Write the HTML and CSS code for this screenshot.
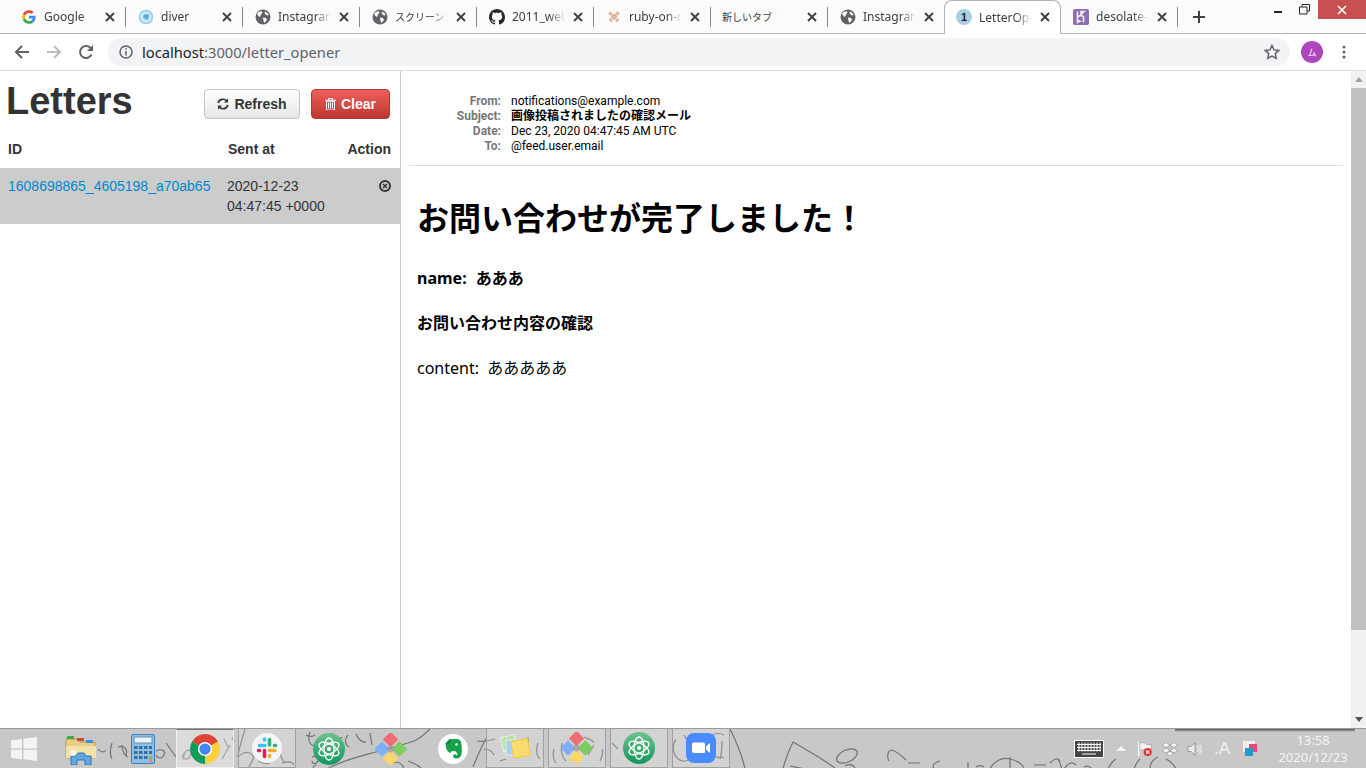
FILE: index.html
```html
<!DOCTYPE html>
<html lang="ja">
<head>
  <title>LetterOpener</title>
  <meta charset="UTF-8">
  <link rel="stylesheet" href="styles.css">
</head>
<body>
  <svg class="sprite" width="0" height="0">
    <symbol id="globe" viewBox="0 0 16 16">
      <circle cx="8" cy="8" r="7.5" fill="#5f6368"/>
      <path d="M3 3.5l3.5-1.5 1 1.5-1.5 2-1 2.5-1.5-1L2 5zM8 8.5l3 .5 1 2-2.5 3-1-2zM10 2.5l3 2 .5 2-2.5-.5-1.5-2z" fill="#fff"/>
    </symbol>
    <symbol id="tabx" viewBox="0 0 10 10">
      <path d="M1 1l8 8M9 1l-8 8" stroke="#3c4043" stroke-width="1.9"/>
    </symbol>
    <symbol id="atom" viewBox="0 0 32 32">
      <defs><linearGradient id="atomBg" x1="0" y1="0" x2="0" y2="1"><stop offset="0" stop-color="#6cc38c"/><stop offset="1" stop-color="#12965f"/></linearGradient></defs>
      <circle cx="16" cy="16" r="16" fill="url(#atomBg)"/>
      <g fill="none" stroke="#fff" stroke-width="1.3">
        <ellipse cx="16" cy="16" rx="11" ry="5" transform="rotate(28 16 16)"/>
        <ellipse cx="16" cy="16" rx="11" ry="5" transform="rotate(-28 16 16)"/>
        <ellipse cx="16" cy="16" rx="11" ry="5" transform="rotate(90 16 16)"/>
      </g>
      <circle cx="16" cy="16" r="2" fill="#fff"/>
    </symbol>
    <symbol id="gem" viewBox="0 0 32 32">
      <rect x="10" y="1" width="11" height="11" fill="#ee6e73" transform="rotate(45 15.5 6.5)"/>
      <rect x="1.5" y="10.5" width="11" height="11" fill="#7fb0f5" transform="rotate(45 7 16)"/>
      <rect x="19" y="10.5" width="11" height="11" fill="#7ecb5f" transform="rotate(45 24.5 16)"/>
      <rect x="10" y="20" width="11" height="11" fill="#f8d86a" transform="rotate(45 15.5 25.5)"/>
      <circle cx="15.5" cy="16" r="3.5" fill="#9a9a9a" opacity=".7"/>
    </symbol>
  </svg>

  <div class="tab-strip">
    <div class="tab">
      <svg class="tab-icon" viewBox="-4 -4 56 56">
        <path fill="#EA4335" d="M24 9.5c3.54 0 6.71 1.22 9.21 3.6l6.85-6.85C35.9 2.38 30.47 0 24 0 14.62 0 6.51 5.38 2.56 13.22l7.98 6.19C12.43 13.72 17.74 9.5 24 9.5z"/>
        <path fill="#4285F4" d="M46.98 24.55c0-1.57-.15-3.09-.38-4.55H24v9.02h12.94c-.58 2.96-2.26 5.48-4.78 7.18l7.73 6c4.51-4.18 7.09-10.36 7.09-17.65z"/>
        <path fill="#FBBC05" d="M10.53 28.59c-.48-1.45-.76-2.99-.76-4.59s.27-3.14.76-4.59l-7.98-6.19C.92 16.46 0 20.12 0 24c0 3.88.92 7.54 2.56 10.78l7.97-6.19z"/>
        <path fill="#34A853" d="M24 48c6.48 0 11.93-2.13 15.89-5.81l-7.73-6c-2.15 1.45-4.92 2.3-8.16 2.3-6.26 0-11.57-4.22-13.47-9.91l-7.98 6.19C6.51 42.62 14.62 48 24 48z"/>
      </svg>
      <span class="tab-title">Google</span><svg class="tab-close"><use href="#tabx"/></svg>
    </div>
    <div class="tab">
      <svg class="tab-icon" viewBox="0 0 16 16">
        <circle cx="8" cy="8" r="6.5" fill="#cfe9f7" stroke="#8fcdee" stroke-width="1.5"/>
        <circle cx="8" cy="8" r="3" fill="#7cc0e8"/>
        <path d="M5 7l6-2-2 6-1.5-2.5z" fill="#4fa8dc"/>
      </svg>
      <span class="tab-title">diver</span><svg class="tab-close"><use href="#tabx"/></svg>
    </div>
    <div class="tab">
      <svg class="tab-icon"><use href="#globe"/></svg>
      <span class="tab-title">Instagram</span><svg class="tab-close"><use href="#tabx"/></svg>
    </div>
    <div class="tab">
      <svg class="tab-icon"><use href="#globe"/></svg>
      <span class="tab-title tab-title-ja">スクリーンショット</span><svg class="tab-close"><use href="#tabx"/></svg>
    </div>
    <div class="tab">
      <svg class="tab-icon" viewBox="0 0 16 16">
        <path fill="#24292e" d="M8 0C3.58 0 0 3.58 0 8c0 3.54 2.29 6.53 5.47 7.59.4.07.55-.17.55-.38 0-.19-.01-.82-.01-1.49-2.01.37-2.53-.49-2.69-.94-.09-.23-.48-.94-.82-1.13-.28-.15-.68-.52-.01-.53.63-.01 1.08.58 1.23.82.72 1.21 1.87.87 2.33.66.07-.52.28-.87.51-1.07-1.78-.2-3.64-.89-3.64-3.95 0-.87.31-1.59.82-2.15-.08-.2-.36-1.02.08-2.12 0 0 .67-.21 2.2.82.64-.18 1.32-.27 2-.27.68 0 1.36.09 2 .27 1.53-1.04 2.2-.82 2.2-.82.44 1.1.16 1.92.08 2.12.51.56.82 1.27.82 2.15 0 3.07-1.87 3.75-3.65 3.95.29.25.54.73.54 1.48 0 1.07-.01 1.93-.01 2.2 0 .21.15.46.55.38A8.013 8.013 0 0016 8c0-4.42-3.58-8-8-8z"/>
      </svg>
      <span class="tab-title">2011_web</span><svg class="tab-close"><use href="#tabx"/></svg>
    </div>
    <div class="tab">
      <svg class="tab-icon" viewBox="0 0 16 16">
        <path d="M3.5 3.5l9 9M12.5 3.5l-9 9" stroke="#dcb09c" stroke-width="3.5" stroke-dasharray="2.5 .7"/>
      </svg>
      <span class="tab-title">ruby-on-rails</span><svg class="tab-close"><use href="#tabx"/></svg>
    </div>
    <div class="tab tab-plain">
      <span class="tab-title tab-title-ja">新しいタブ</span><svg class="tab-close"><use href="#tabx"/></svg>
    </div>
    <div class="tab">
      <svg class="tab-icon"><use href="#globe"/></svg>
      <span class="tab-title">Instagram</span><svg class="tab-close"><use href="#tabx"/></svg>
    </div>
    <div class="tab active">
      <svg class="tab-icon" viewBox="0 0 16 16">
        <circle cx="8" cy="8" r="8" fill="#a9cfe2"/>
        <text x="8" y="12" class="count-text">1</text>
      </svg>
      <span class="tab-title">LetterOpener</span><svg class="tab-close"><use href="#tabx"/></svg>
    </div>
    <div class="tab">
      <svg class="tab-icon" viewBox="0 0 16 16">
        <rect width="16" height="16" rx="2" fill="#8f6db3"/>
        <path d="M4.5 2.5v11M4.5 8c2-1.5 5-2 6 0v5.5M8 2.5l3 0-3 3zM4.5 11v2.5l2.5-1.2z" fill="none" stroke="#efe8f5" stroke-width="1.7"/>
      </svg>
      <span class="tab-title">desolate-river</span><svg class="tab-close"><use href="#tabx"/></svg>
    </div>
    <svg class="new-tab" width="12" height="12" viewBox="0 0 12 12"><path d="M6 0v12M0 6h12" stroke="#3c4043" stroke-width="2"/></svg>
    <div class="win-controls">
      <div class="win-btn"><svg width="10" height="10" viewBox="0 0 10 10"><path d="M1 7h8" stroke="#222" stroke-width="2"/></svg></div>
      <div class="win-btn"><svg width="11" height="11" viewBox="0 0 11 11"><path d="M3 2.5V.5h7.5V7H8M.5 3h7.5v7H.5z" fill="none" stroke="#222" stroke-width="1"/></svg></div>
      <div class="win-close"><svg width="10" height="10" viewBox="0 0 10 10"><path d="M1 1l8 8M9 1l-8 8" stroke="#fff" stroke-width="1.6"/></svg></div>
    </div>
  </div>

  <div class="toolbar">
    <div class="tool-btn"><svg width="16" height="16" viewBox="0 0 16 16"><path d="M15 8H2M8 2L2 8l6 6" fill="none" stroke="#5f6368" stroke-width="2"/></svg></div>
    <div class="tool-btn"><svg width="16" height="16" viewBox="0 0 16 16"><path d="M1 8h13M8 2l6 6-6 6" fill="none" stroke="#b9bbbe" stroke-width="2"/></svg></div>
    <div class="tool-btn"><svg width="16" height="16" viewBox="0 0 16 16"><path d="M13.5 10.5A6 6 0 1 1 12.3 3.8L14.5 6" fill="none" stroke="#5f6368" stroke-width="2"/><path d="M15 1v6H9z" fill="#5f6368"/></svg></div>
    <div class="omnibox">
      <svg width="14" height="14" viewBox="0 0 14 14"><circle cx="7" cy="7" r="6" fill="none" stroke="#5f6368" stroke-width="1.5"/><path d="M7 6v4.5M7 3.3v1.5" stroke="#5f6368" stroke-width="1.5"/></svg>
      <span class="url"><span class="url-host">localhost</span>:3000/letter_opener</span>
      <svg class="star" width="16" height="16" viewBox="0 0 16 16"><path d="M8 1.5l2 4.4 4.8.5-3.600 3.200 1 4.700L8 12l-4.200 2.300 1-4.700L1.200 6.400 6 5.900z" fill="none" stroke="#5f6368" stroke-width="1.5"/></svg>
    </div>
    <div class="avatar">ム</div>
    <svg class="menu-dots" width="4" height="14" viewBox="0 0 4 14"><circle cx="2" cy="2" r="1.5" fill="#5f6368"/><circle cx="2" cy="7" r="1.5" fill="#5f6368"/><circle cx="2" cy="12" r="1.5" fill="#5f6368"/></svg>
  </div>

  <div class="main">
    <div class="letters">
      <div class="letters-head">
        <h1>Letters</h1>
        <a class="btn btn-refresh">
          <svg width="12" height="12" viewBox="0 0 12 12"><path d="M1.2 5a4.900 4.900 0 0 1 8.500-2M10.800 7a4.900 4.900 0 0 1-8.500 2" fill="none" stroke="#333" stroke-width="1.7"/><path d="M11 .5V4.500H7zM1 11.500V7.500H5z" fill="#333"/></svg>
          Refresh
        </a>
        <a class="btn btn-clear">
          <svg width="11" height="12" viewBox="0 0 11 12"><path d="M0 2.200h11M3.500 2V.6h4V2" fill="none" stroke="#fff" stroke-width="1"/><path d="M1.500 3.200h8V12h-8zM3.500 4.500v6M5.500 4.500v6M7.500 4.500v6" fill="none" stroke="#fff" stroke-width="1"/></svg>
          Clear
        </a>
      </div>
      <div class="letters-cols">
        <span>ID</span><span>Sent at</span><span>Action</span>
      </div>
      <div class="letter-row">
        <a class="letter-id">1608698865_4605198_a70ab65</a>
        <span class="letter-date">2020-12-23<br>04:47:45 +0000</span>
        <svg class="letter-del" width="12" height="12" viewBox="0 0 12 12"><circle cx="6" cy="6" r="5" fill="none" stroke="#333" stroke-width="2"/><path d="M4 4l4 4M8 4l-4 4" stroke="#333" stroke-width="1.5"/></svg>
      </div>
    </div>

    <div class="preview">
      <dl class="mail-head">
        <dt>From:</dt><dd>notifications@example.com</dd>
        <dt>Subject:</dt><dd class="subject">画像投稿されましたの確認メール</dd>
        <dt>Date:</dt><dd>Dec 23, 2020 04:47:45 AM UTC</dd>
        <dt>To:</dt><dd>@feed.user.email</dd>
      </dl>
      <div class="mail-body">
        <h1>お問い合わせが完了しました！</h1>
        <h3>name: あああ</h3>
        <h3>お問い合わせ内容の確認</h3>
        <p>content: あああああ</p>
      </div>
    </div>

    <div class="scrollbar">
      <div class="scroll-arrow"><span class="arrow-up"></span></div>
      <div class="scroll-track"><div class="scroll-thumb"></div></div>
      <div class="scroll-arrow"><span class="arrow-down"></span></div>
    </div>
  </div>

  <div class="taskbar">
    <svg class="wallpaper" width="1366" height="40" viewBox="0 0 1366 40">
      <g fill="none" stroke="#737373" stroke-width="1.2">
        <path d="M98 20c2 3 6 4 8 1M112 14c-2 6-2 12 0 16M118 18c6-2 10 2 8 8M122 16c0 6 2 10 6 12M146 16c-4 2-6 8-2 12M156 22c6-3 10 0 8 4s-6 4-8 0M166 14l10 14"/>
        <path d="M184 28c0-6 4-8 6-6s0 8-4 8-4-2-2-6M224 10l4 8M232 8l2 5M222 30l8-14"/>
        <path d="M245 0c-2 8-6 18-7 28M238 28c6-6 12-6 16 0M248 40l6-12M258 32c4 2 8 4 12 2M282 34c6-2 10-2 12 2M280 22c0 4 2 10 6 12"/>
        <path d="M306 6c3 2 6 2 9 0M310 3c-2 6-2 12 4 14M322 6c-2 5 0 10 5 8M332 4c4 6 8 8 10 4M348 6c-4 4-3 10 1 12M356 5c2 5 6 9 10 8M370 4l2 12M312 28c5-2 8 0 6 4s-6 3-6 0M316 36c-4 2-4 4 0 4"/>
        <path d="M327 40c14-8 30-12 45-16 16-4 30-8 42-12 8-4 12-8 16-12"/>
        <path d="M392 34c6-2 10 0 12 6M408 32c6 2 10 4 14 8"/>
        <path d="M473 38c4-10 8-20 14-30M477 12c6 1 12 0 18-2M484 20c4 0 8 2 10 6M500 32l6-2M516 14c2-2 6-2 6 2s-4 6-6 4M528 8v14M538 14c-2 6-2 12 2 16"/>
        <path d="M554 20c-2 6 0 12 2 14M562 14c-2 8 0 14 4 18M584 8c4 2 8 2 10 6M588 26l6-10M602 20c2 4 0 8-2 12M612 14l6 6M630 18l10 0"/>
        <path d="M684 6c4 6 8 12 8 20M676 10c-4 6-4 14 2 20 6 4 14 2 14-6M712 6c4-2 8-2 12 0M722 12c0 6 0 12-2 18M712 26c4 2 8 4 12 2"/>
        <path d="M730 0c6 12 12 26 15 40M793 13c-4 8-8 18-10 27M793 13c14 8 28 16 42 26M790 37l15 3"/>
        <ellipse cx="847" cy="27" rx="11" ry="6" transform="rotate(-25 847 27)"/>
        <path d="M845 37c4-2 8-2 10 2M892 21c-5 0-5 8-3 11M892 21c6 2 10 6 14 10M908 34h12M940 32c-6 1-8 5-6 8M968 33v7M976 38c4-2 6-2 8 0M990 40c4-8 12-12 20-10s14 6 14 10M1010 28v12M1034 36h12M1050 34c4-4 8-6 10-2M1058 30c2 2 2 6 4 10"/>
        <path d="M1064 40c4-6 8-8 12-4M1084 38c4-2 6 0 8 2M1108 40c2-4 4-8 8-10M1134 40c2-6 4-8 6-10M1150 40c0-6 4-10 8-12M1166 30c4 2 8 6 10 10"/>
      </g>
    </svg>
    <div class="window-shadow"></div>
    <div class="start">
      <svg width="28" height="26" viewBox="0 0 28 26"><path d="M1 4.5l11-1.500v9.500H1zM13.500 2.800L27 1v11.500H13.500zM1 13.700h11v9.500L1 21.700zM13.500 13.700H27V25l-13.500-1.800z" fill="#f4f4f4"/></svg>
    </div>
    <div class="task-apps">
      <div class="task-app">
        <svg width="32" height="32" viewBox="0 0 32 32">
          <path d="M1 6h12l2 3h15v16H1z" fill="#e9cf85" stroke="#b49a52"/>
          <rect x="2" y="3" width="7" height="3" fill="#3fae49"/><rect x="12" y="5" width="7" height="3" fill="#d8473e"/><rect x="21" y="7" width="7" height="3" fill="#3c8fdc"/>
          <path d="M1 13h30v12H1z" fill="#f3e2a8"/>
          <path d="M6 32V23h5l2-3h6l2 3h5v9h-6v-5h-8v5z" fill="#5fa8e0" stroke="#2f75b5"/>
          <circle cx="8" cy="20" r="3" fill="#fff" opacity=".8"/>
        </svg>
      </div>
      <div class="task-app">
        <svg width="24" height="30" viewBox="0 0 24 30">
          <rect x=".5" y=".5" width="23" height="29" rx="1.5" fill="#8cc0e8" stroke="#3a7fb8"/>
          <rect x="3" y="3" width="18" height="6" fill="#e8f2f8" stroke="#6a8ea8"/>
          <g fill="#3b6e98"><rect x="3" y="12" width="3.5" height="3"/><rect x="8" y="12" width="3.5" height="3"/><rect x="13" y="12" width="3.5" height="3"/><rect x="18" y="12" width="3" height="3"/><rect x="3" y="17" width="3.5" height="3"/><rect x="8" y="17" width="3.5" height="3"/><rect x="13" y="17" width="3.5" height="3"/><rect x="18" y="17" width="3" height="3"/><rect x="3" y="22" width="3.5" height="3"/><rect x="8" y="22" width="3.5" height="3"/><rect x="13" y="22" width="3.5" height="3"/></g>
          <rect x="18" y="22" width="3" height="6" fill="#e8913a"/>
        </svg>
      </div>
      <div class="task-app boxed active-app">
        <svg width="30" height="30" viewBox="0 0 32 32">
          <path d="M16 16L2.200 8A16 16 0 0 1 29.900 8z" fill="#db4437"/>
          <path d="M16 16L2.200 8A16 16 0 0 0 16 32z" fill="#0f9d58"/>
          <path d="M16 16L29.900 8A16 16 0 0 1 16 32z" fill="#ffcd40"/>
          <circle cx="16" cy="16" r="7.5" fill="#fff"/><circle cx="16" cy="16" r="6" fill="#4285f4"/>
        </svg>
      </div>
      <div class="task-app boxed">
        <svg width="30" height="30" viewBox="0 0 30 30">
          <circle cx="15" cy="15" r="15" fill="#f5f5f5"/>
          <g stroke-width="3.6" stroke-linecap="round" fill="none">
            <path d="M7.5 12.500h5.500M12.500 6v1" stroke="#36c5f0"/>
            <path d="M17.5 6.500v5.500M23.500 12.500h-1" stroke="#2eb67d"/>
            <path d="M23 17.500h-5.500M17.500 23.500v-1" stroke="#ecb22e"/>
            <path d="M12.5 23.500V17.500M6.500 17.500h1" stroke="#e01e5a"/>
          </g>
        </svg>
      </div>
      <div class="task-app"><svg width="32" height="32"><use href="#atom"/></svg></div>
      <div class="task-app"><svg width="32" height="32"><use href="#gem"/></svg></div>
      <div class="task-app">
        <svg width="30" height="30" viewBox="0 0 30 30">
          <circle cx="15" cy="15" r="15" fill="#fff"/>
          <path d="M7.5 9.500L12 5h6c3 0 4.500 1 5 3 .8 4 1.200 9 .4 12.500-.8 3-3.200 4.500-6 4-2-.3-2.800-2-2-3.500.7-1 2.500-1 3 .5l1-.2c0-3-1.500-4-3.500-4.300-2-.3-3 .5-3.500 2-2-.5-4-3-4.500-6z" fill="#14a14a"/>
          <path d="M7.5 9.500L12 5v4.500z" fill="#0e7a36"/>
          <circle cx="18.5" cy="10.5" r="1.2" fill="#fff"/>
        </svg>
      </div>
      <div class="task-app boxed">
        <svg width="32" height="30" viewBox="0 0 32 30">
          <rect x="3" y="3" width="14" height="14" fill="#b8e4a8" stroke="#e8f5e0" transform="rotate(-15 10 10)"/>
          <rect x="7" y="7" width="15" height="15" fill="#a8d0f5" stroke="#e0eefa"/>
          <rect x="13" y="7" width="17" height="17" fill="#f8dc70" stroke="#f0c840" transform="rotate(-10 21 15)"/>
        </svg>
      </div>
      <div class="task-app boxed"><svg width="32" height="32"><use href="#gem"/></svg></div>
      <div class="task-app boxed"><svg width="32" height="32"><use href="#atom"/></svg></div>
      <div class="task-app boxed">
        <svg width="30" height="30" viewBox="0 0 30 30">
          <rect width="30" height="30" rx="8" fill="#4a8cff"/>
          <path d="M6 11a1.5 1.5 0 0 1 1.5-1.5H17a2 2 0 0 1 2 2V19a1 1 0 0 1-1 1H8a2 2 0 0 1-2-2zM20 13.500l4-3.500v10l-4-3.500z" fill="#fff"/>
        </svg>
      </div>
    </div>
    <div class="tray">
      <svg class="tray-kbd" width="30" height="18" viewBox="0 0 30 18">
        <rect x=".5" y=".5" width="29" height="17" fill="#444" stroke="#fff"/>
        <path d="M3 4.5h24M3 7.5h24M3 10.5h24M5 2.5v9M8 2.5v9M11 2.5v9M14 2.5v9M17 2.5v9M20 2.5v9M23 2.5v9M26 2.5v9M8 14h14" stroke="#fff" stroke-width="1"/>
      </svg>
      <span class="tray-caret"></span>
      <svg class="tray-flag" width="16" height="16" viewBox="0 0 18 16">
        <path d="M2 0v16" stroke="#fff" stroke-width="1.5"/><path d="M3 1h7l1 2h5v6H3z" fill="#f2f2f2" stroke="#777" stroke-width=".5"/>
        <circle cx="12" cy="11.5" r="4.5" fill="#e0302a"/><path d="M10 9.500l4 4M14 9.500l-4 4" stroke="#fff" stroke-width="1.2"/>
      </svg>
      <svg width="16" height="14" viewBox="0 0 16 14"><path d="M4 .5L8 3 4 5.500 0 3zM12 .5L16 3l-4 2.500L8 3zM4 6l4 2.500L4 11 0 8.500zM12 6l4 2.500-4 2.500-4-2.500zM4 11.500l4-2 4 2-4 2.500z" fill="#f4f4f4" stroke="#666" stroke-width=".4"/></svg>
      <svg width="16" height="14" viewBox="0 0 16 14"><path d="M1 4.5h3L8 1v12L4 9.500H1z" fill="#eee" stroke="#777" stroke-width=".6"/><path d="M10.5 4a4 4 0 0 1 0 6M12.500 2.500a7 7 0 0 1 0 9" fill="none" stroke="#f2f2f2" stroke-width="1.2"/></svg>
      <span class="tray-ime">.A</span>
      <svg width="16" height="16" viewBox="0 0 16 16"><rect x="2" y="0" width="12" height="11" fill="#eee"/><rect x="8" y="3" width="8" height="8" fill="#e8487c"/><rect x="4" y="7" width="8" height="8" fill="#2a97c9"/></svg>
      <div class="clock"><div>13:58</div><div>2020/12/23</div></div>
    </div>
  </div>
</body>
</html>
```

FILE: styles.css
```css
* {
  box-sizing: border-box;
}

html,
body {
  height: 100%;
}

body {
  display: flex;
  flex-direction: column;
  height: 768px;
  margin: 0;
  overflow: hidden;
  font-family: "Liberation Sans", Arial, sans-serif;
  background: white;
}

.sprite {
  position: absolute;
}

/* タブ */
.tab-strip {
  display: flex;
  align-items: flex-start;
  flex: 0 0 34px;
  min-height: 0;
  padding-left: 9px;
  background: #fbfbfb;
  border-bottom: 1px solid #b4b4b4;
  font-family: "Noto Sans", "Noto Sans CJK JP", sans-serif;
  font-size: 12px;
  color: #3c4043;
}

.tab {
  display: flex;
  align-items: center;
  flex: 0 0 117px;
  height: 33px;
  min-width: 0;
  padding: 0 9px 0 12px;
  background: linear-gradient(#888, #888) right 7px / 1px 20px no-repeat;
}

.tab-icon {
  flex: 0 0 16px;
  width: 16px;
  height: 16px;
  margin-right: 7px;
}

.tab-plain {
  padding-left: 11px;
}

.tab-title {
  flex: 1;
  min-width: 0;
  overflow: hidden;
  margin-right: 6px;
  white-space: nowrap;
  -webkit-mask-image: linear-gradient(to right, black 70%, transparent 100%);
  mask-image: linear-gradient(to right, black 70%, transparent 100%);
}

.tab-title-ja {
  font-size: 10px;
}

.tab-plain .tab-title {
  -webkit-mask-image: none;
  mask-image: none;
}

.tab-close {
  flex: 0 0 14px;
  width: 14px;
  height: 10px;
}

.tab.active {
  position: relative;
  z-index: 1;
  height: 34px;
  margin-left: -1px;
  background: white;
  border: 1px solid #b4b4b4;
  border-bottom: none;
  border-radius: 8px 8px 0 0;
  padding: 0 8px 1px 11px;
}

.count-text {
  font-family: "Liberation Sans", sans-serif;
  font-size: 11px;
  font-weight: bold;
  text-anchor: middle;
  fill: #222;
}

.new-tab {
  align-self: center;
  margin-left: 15px;
}

.win-controls {
  display: flex;
  align-items: flex-start;
  height: 19px;
  margin-left: auto;
}

.win-btn {
  display: flex;
  align-items: center;
  justify-content: center;
  width: 26px;
  height: 19px;
}

.win-close {
  display: flex;
  align-items: center;
  justify-content: center;
  width: 48px;
  height: 19px;
  margin-left: 1px;
  background: #c75050;
}

/* ツールバー */
.toolbar {
  display: flex;
  align-items: center;
  flex: 0 0 37px;
  padding-left: 6px;
  background: white;
  border-bottom: 1px solid #dcdcdc;
}

.tool-btn {
  display: flex;
  align-items: center;
  justify-content: center;
  width: 32px;
  height: 28px;
}

.omnibox {
  display: flex;
  align-items: center;
  width: 1182px;
  height: 28px;
  margin-left: 6px;
  padding: 0 10px 0 11px;
  background: #f1f3f4;
  border-radius: 14px;
  font-family: "Noto Sans", sans-serif;
  font-size: 14.7px;
  color: #5f6368;
}

.url {
  margin-left: 9px;
}

.url-host {
  color: #202124;
}

.star {
  margin-left: auto;
}

.avatar {
  display: flex;
  align-items: center;
  justify-content: center;
  width: 22px;
  height: 22px;
  margin-left: 11px;
  background: #ad45bd;
  border-radius: 50%;
  font-family: "Noto Sans CJK JP", sans-serif;
  font-size: 9px;
  color: white;
}

.menu-dots {
  margin-left: 19px;
}

/* メイン */
.main {
  display: flex;
  flex: 1;
  min-height: 0;
}

.letters {
  flex: 0 0 401px;
  background: white;
  border-right: 1px solid #ccc;
  font-size: 14px;
  color: #333;
}

.letters-head {
  display: flex;
  align-items: flex-start;
  height: 65px;
  padding: 18px 10px 0 6px;
}

.letters-head h1 {
  flex: 1;
  margin: -8px 0 0;
  font-size: 38px;
  line-height: 40px;
  font-weight: bold;
}

.btn {
  display: flex;
  align-items: center;
  justify-content: center;
  gap: 5px;
  height: 30px;
  border-radius: 4px;
  font-weight: bold;
  font-size: 14px;
}

.btn-refresh {
  width: 96px;
  margin-right: 11px;
  background: linear-gradient(#fff, #e6e6e6);
  border: 1px solid #c4c4c4;
  color: #333;
}

.btn-clear {
  width: 79px;
  background: linear-gradient(#ee5f5b, #bd362f);
  border: 1px solid #b03a34;
  color: white;
}

.letters-cols {
  display: grid;
  grid-template-columns: 220px 1fr auto;
  align-items: center;
  height: 32px;
  padding: 0 9px 6px 8px;
  font-weight: bold;
}

.letter-row {
  display: grid;
  grid-template-columns: 219px 1fr auto;
  height: 56px;
  padding: 8px 9px 0 8px;
  background: #ccc;
  line-height: 20px;
}

.letter-id {
  color: #0088cc;
}

.letter-del {
  margin-top: 4px;
}

/* プレビュー */
.preview {
  flex: 1;
  padding: 23px 8px 0;
  font-family: "Noto Sans", "Noto Sans CJK JP", sans-serif;
  color: black;
}

.mail-head {
  display: grid;
  grid-template-columns: 92px 1fr;
  column-gap: 10px;
  margin: 0;
  padding-bottom: 11px;
  border-bottom: 1px solid #ddd;
  font-family: Roboto, "Noto Sans CJK JP", sans-serif;
  font-size: 12px;
  line-height: 15px;
}

.mail-head dt {
  font-weight: bold;
  color: #777;
  text-align: right;
}

.mail-head dd {
  margin: 0;
  white-space: nowrap;
}

.mail-head .subject {
  font-weight: bold;
}

.mail-body {
  padding: 0 8px;
}

.mail-body h1 {
  margin: 30px 0 0;
  font-size: 32px;
  line-height: 44px;
}

.mail-body h3 {
  margin: 23px 0 0;
  font-size: 16px;
  line-height: 22px;
  word-spacing: 5px;
}

.mail-body h1 + h3 {
  margin-top: 27px;
}

.mail-body p {
  margin: 23px 0 0;
  font-size: 16px;
  line-height: 22px;
  word-spacing: 4px;
}

/* スクロールバー */
.scrollbar {
  display: flex;
  flex-direction: column;
  flex: 0 0 15px;
  background: #f1f1f1;
}

.scroll-arrow {
  display: flex;
  align-items: center;
  justify-content: center;
  flex: 0 0 17px;
}

.arrow-up {
  border: 4px solid transparent;
  border-top: none;
  border-bottom: 5px solid #a3a3a3;
}

.arrow-down {
  border: 4px solid transparent;
  border-bottom: none;
  border-top: 5px solid #505050;
}

.scroll-track {
  flex: 1;
}

.scroll-thumb {
  height: 542px;
  background: #c1c1c1;
}

/* タスクバー */
.taskbar {
  position: relative;
  display: flex;
  align-items: stretch;
  flex: 0 0 40px;
  background: #c8c8c8;
  border-top: 1px solid #9a9a9a;
}

.wallpaper {
  position: absolute;
  top: 0;
  left: 0;
}

.window-shadow {
  position: absolute;
  top: 0;
  left: 1175px;
  width: 180px;
  height: 3px;
  background: linear-gradient(#555, rgba(85, 85, 85, 0));
}

.start {
  position: relative;
  display: flex;
  align-items: center;
  justify-content: center;
  flex: 0 0 52px;
  padding-right: 4px;
}

.task-apps {
  position: relative;
  display: flex;
  gap: 4px;
}

.task-app {
  display: flex;
  align-items: center;
  justify-content: center;
  width: 58px;
}

.task-app.boxed {
  background: rgba(255, 255, 255, 0.2);
  border: 1px solid #a0a0a0;
  border-top: none;
}

.task-app.active-app {
  background: rgba(255, 255, 255, 0.35);
  border: 1px solid #f0f0f0;
  border-top: 1px solid #777;
}

.tray {
  position: relative;
  display: flex;
  align-items: center;
  margin-left: auto;
  padding-right: 18px;
  gap: 9px;
}

.tray-kbd {
  margin-right: 3px;
}

.tray-caret {
  border: 5px solid transparent;
  border-top: none;
  border-bottom: 5px solid #f4f4f4;
  margin-right: 2px;
}

.tray-ime {
  width: 20px;
  font-size: 17px;
  line-height: 17px;
  text-align: center;
  color: #f2f2f2;
}

.clock {
  width: 70px;
  margin-left: 12px;
  font-family: "Noto Sans", sans-serif;
  font-size: 13px;
  line-height: 17px;
  text-align: center;
  color: #f4f4f4;
}
```
